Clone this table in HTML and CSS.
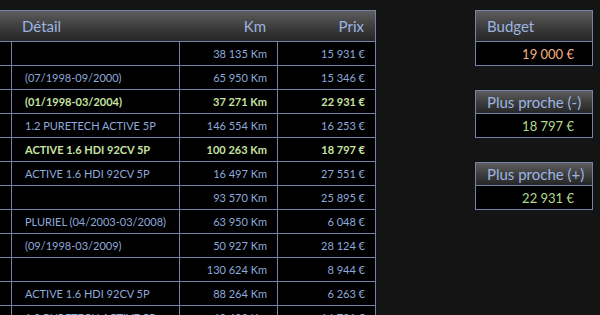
FILE: index.html
```html
<!DOCTYPE html>
<html lang="fr">
<head>
<meta charset="utf-8">
<link rel="stylesheet" href="styles.css">
</head>
<body>
<div class="page">
  <div class="sheet">
    <div class="grid">
      <div class="head">
        <span></span>
        <span class="h-detail">Détail</span>
        <span class="h-num">Km</span>
        <span class="h-num">Prix</span>
      </div>

      <div class="c"></div><div class="c"></div><div class="c n">38 135 Km</div><div class="c n">15 931 €</div>
      <div class="c"></div><div class="c t">(07/1998-09/2000)</div><div class="c n">65 950 Km</div><div class="c n">15 346 €</div>
      <div class="c"></div><div class="c t hl">(01/1998-03/2004)</div><div class="c n hl">37 271 Km</div><div class="c n hl">22 931 €</div>
      <div class="c"></div><div class="c t">1.2 PURETECH ACTIVE 5P</div><div class="c n">146 554 Km</div><div class="c n">16 253 €</div>
      <div class="c"></div><div class="c t hl">ACTIVE 1.6 HDI 92CV 5P</div><div class="c n hl">100 263 Km</div><div class="c n hl">18 797 €</div>
      <div class="c"></div><div class="c t">ACTIVE 1.6 HDI 92CV 5P</div><div class="c n">16 497 Km</div><div class="c n">27 551 €</div>
      <div class="c"></div><div class="c"></div><div class="c n">93 570 Km</div><div class="c n">25 895 €</div>
      <div class="c"></div><div class="c t">PLURIEL (04/2003-03/2008)</div><div class="c n">63 950 Km</div><div class="c n">6 048 €</div>
      <div class="c"></div><div class="c t">(09/1998-03/2009)</div><div class="c n">50 927 Km</div><div class="c n">28 124 €</div>
      <div class="c"></div><div class="c"></div><div class="c n">130 624 Km</div><div class="c n">8 944 €</div>
      <div class="c"></div><div class="c t">ACTIVE 1.6 HDI 92CV 5P</div><div class="c n">88 264 Km</div><div class="c n">6 263 €</div>
      <div class="c"></div><div class="c t">1.2 PURETECH ACTIVE 5P</div><div class="c n">63 423 Km</div><div class="c n">16 731 €</div>
    </div>
  </div>

  <div class="side">
    <div class="box">
      <div class="box-head tall">Budget</div>
      <div class="box-val orange">19 000 €</div>
    </div>
    <div class="box">
      <div class="box-head">Plus proche (-)</div>
      <div class="box-val green">18 797 €</div>
    </div>
    <div class="box">
      <div class="box-head">Plus proche (+)</div>
      <div class="box-val green">22 931 €</div>
    </div>
  </div>
</div>
</body>
</html>
```

FILE: styles.css
```css
html, body {
  margin: 0;
  padding: 0;
  background: #141414;
  overflow: hidden;
}

body {
  width: 600px;
  height: 315px;
  font-family: Lato, "Open Sans", sans-serif;
  color: #8ea9db;
}

.page {
  display: flex;
  align-items: flex-start;
  padding-top: 10px;
}

.sheet {
  width: 376px;
  flex: none;
}

.grid {
  display: grid;
  grid-template-columns: 11px 167px 97px 97px;
  grid-template-rows: 30px;
  grid-auto-rows: 23px;
  gap: 1px;
  background: #7482a6;
  padding: 1px 1px 0 0;
}

.head {
  grid-column: 1 / -1;
  display: grid;
  grid-template-columns: 12px 166px 98px 98px;
  align-items: center;
  background: linear-gradient(#5d5d5d, #3c3c3c 55%, #262626);
  font-size: 15px;
  color: #9db4e0;
}

.h-detail {
  padding-left: 10px;
}

.h-num {
  text-align: right;
  padding-right: 10px;
}

.c {
  background: #000;
  font-size: 11px;
  display: flex;
  align-items: center;
  white-space: nowrap;
}

.t {
  padding-left: 13px;
}

.n {
  justify-content: flex-end;
  padding-right: 10px;
}

.hl {
  color: #c8e3a3;
  font-weight: bold;
}

.side {
  margin-left: 99px;
  width: 118px;
  display: flex;
  flex-direction: column;
  gap: 24px;
}

.box {
  border: 1px solid #7482a6;
  display: flex;
  flex-direction: column;
}

.box-head {
  height: 22px;
  display: flex;
  align-items: center;
  padding-left: 11px;
  font-size: 15px;
  color: #9db4e0;
  background: linear-gradient(#5d5d5d, #3c3c3c 55%, #262626);
  border-bottom: 1px solid #7482a6;
  white-space: nowrap;
}

.box-head.tall {
  height: 30px;
}

.box-val {
  height: 23px;
  background: #000;
  display: flex;
  align-items: center;
  justify-content: flex-end;
  padding-right: 18px;
  font-size: 13px;
}

.orange {
  color: #f4b183;
}

.green {
  color: #b4d98e;
}
```
